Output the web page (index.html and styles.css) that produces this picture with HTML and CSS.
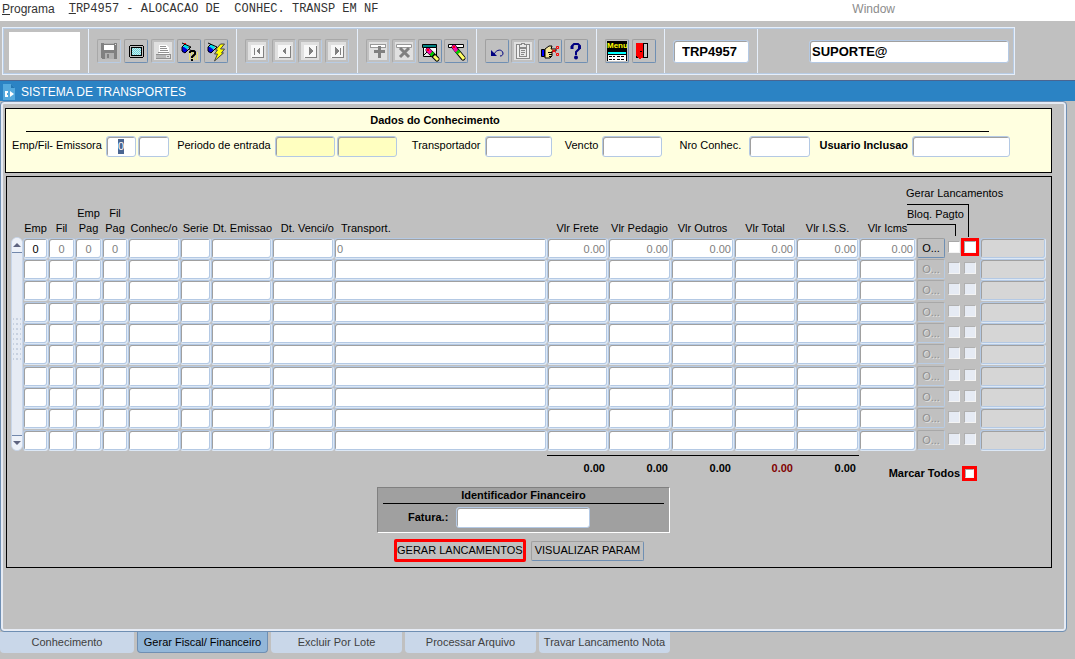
FILE: index.html
```html
<!DOCTYPE html>
<html lang="pt-BR">
<head>
    <meta charset="UTF-8">
    <meta name="viewport" content="width=device-width, initial-scale=1.0">
    <title>TRP4957 - Sistema de Transportes</title>
    <link rel="stylesheet" href="styles.css">
</head>
<body>
    <nav class="menu">
        <a href="#"><u>P</u>rograma</a>
        <a href="#" class="program-name"><u>T</u>RP4957 - ALOCACAO DE  CONHEC. TRANSP EM NF</a>
        <a href="#" class="window-menu">Window</a>
    </nav>

    <header class="toolbar">
        <div class="group"><div class="logo"></div></div>
        <div class="group">
            <button class="tool off" aria-label="Salvar"><svg viewBox="0 0 24 24"><path fill="#808080" d="M4 4h16v16H5l-1-1z"/><path fill="#fff" d="M7 6h10v5H7z"/><path fill="#b0b0b0" d="M7 4h10v1H7zM8 14h9v6H8z"/><path fill="#808080" d="M10 15h2v4h-2z"/><path fill="#e8e8e8" d="M18 5h1v1h-1z"/></svg></button>
            <button class="tool" aria-label="Tela"><svg viewBox="0 0 24 24"><path d="M6 6h13v1h1v11h-1v1H6v-1H5V7h1z"/><path fill="#c0c0c0" d="M6 7h13v11H6z"/><path d="M7 8h11v9H7z"/><path fill="#d8e8e8" d="M8 9h9v7H8z"/><path stroke="#60d8e0" stroke-dasharray="1 1" d="M8 9.500h9M8 11.500h9M8 13.500h9M8 15.500h9"/><path stroke="#60d8e0" stroke-dasharray="1 1" d="M9 10.500h8M9 12.500h8M9 14.500h8"/></svg></button>
            <button class="tool off" aria-label="Imprimir"><svg viewBox="0 0 24 24"><path fill="#e0e0e0" d="M3 3h18v18H3z"/><path fill="#fff" d="M8 6h8l2 3v6H8z"/><path fill="#909090" d="M9 7h6v1H9zM9 9h7v1H9zM9 11h8v1H9zM7 13h11v1H7zM5 15h15v1H5zM5 19h15v1H5zM19 15h1v5h-1zM16 17h2v1h-2z"/><path fill="#b8b8b8" d="M5 16h10v3H5z"/></svg></button>
            <button class="tool" aria-label="Entrar consulta"><svg viewBox="0 0 24 24" class="smooth"><path stroke="#e8e070" stroke-width="8" stroke-dasharray="1 1" d="M12 17h9"/><path fill="#00e0e8" d="M7 6h4l1 3-4 2-2-3z"/><path fill="#0000e0" d="M5 8h2l4 3-3 3-3-1z"/><path fill="none" stroke="#000" d="M5 4l9 4-6 6-3-2V8l3-3M12 8l1 3"/><path fill="#f00" d="M7 4h2v1H7z"/><path stroke="#000" stroke-width="2" fill="none" d="M13 14v-1l1-1h3l1 1v2l-3 3v1M14 21h2"/></svg></button>
            <button class="tool" aria-label="Executar consulta"><svg viewBox="0 0 24 24" class="smooth"><path fill="#00e0e8" d="M6 6h4l1 3-4 2-2-3z"/><path fill="#0000e0" d="M4 8h2l4 3-3 3-3-1z"/><path fill="none" stroke="#000" d="M4 4l9 4-6 6-3-2V8l3-3"/><path fill="#ff0" stroke="#444" d="M16.500 5h4l-4 5h4l-3 4h2l-9 8 3-7h-3l3-4h-2z"/></svg></button>
        </div>
        <div class="group">
            <button class="tool off" aria-label="Primeiro"><svg viewBox="0 0 24 24"><path fill="#e0e0e0" d="M3 3h18v18H3z"/><path fill="#f8f8f8" d="M6 6h13v13H6z"/><path fill="#808080" d="M18 7h1v12H7v-1h11zM9 9h1v7H9zM15 8v8l-4-4z"/></svg></button>
            <button class="tool off" aria-label="Anterior"><svg viewBox="0 0 24 24"><path fill="#e0e0e0" d="M3 3h18v18H3z"/><path fill="#f8f8f8" d="M6 6h13v13H6z"/><path fill="#808080" d="M18 7h1v12H7v-1h11zM14 8v8l-4-4z"/></svg></button>
            <button class="tool off" aria-label="Proximo"><svg viewBox="0 0 24 24"><path fill="#e0e0e0" d="M3 3h18v18H3z"/><path fill="#f8f8f8" d="M6 6h13v13H6z"/><path fill="#808080" d="M18 7h1v12H7v-1h11zM11 8v8l4-4z"/></svg></button>
            <button class="tool off" aria-label="Ultimo"><svg viewBox="0 0 24 24"><path fill="#e0e0e0" d="M3 3h18v18H3z"/><path fill="#f8f8f8" d="M6 6h13v13H6z"/><path fill="#808080" d="M18 7h1v12H7v-1h11zM15 9h1v7h-1zM10 8v8l4-4z"/></svg></button>
        </div>
        <div class="group">
            <button class="tool off" aria-label="Incluir"><svg viewBox="0 0 24 24"><path fill="#e0e0e0" d="M3 3h18v18H3z"/><path fill="#fff" stroke="#999" d="M4.500 5.500h15v3h-15z"/><path fill="#808080" d="M12 7h3v4h4v3h-4v5h-3v-5H8v-3h4z"/></svg></button>
            <button class="tool off" aria-label="Excluir"><svg viewBox="0 0 24 24" class="smooth"><path fill="#e0e0e0" d="M3 3h18v18H3z"/><path fill="#fff" stroke="#999" d="M4.500 5.500h15v3h-15z"/><path stroke="#808080" stroke-width="3" d="M8 9l9 9M17 9l-9 9"/></svg></button>
            <button class="tool" aria-label="Limpar bloco"><svg viewBox="0 0 24 24" class="smooth"><path fill="#008080" stroke="#000" d="M4.500 5.500h14v3h-14z"/><path fill="#e8e8e8" stroke="#000" d="M5.500 8.500h13v9h-13z"/><path fill="#fff" d="M6 9h12v3H6z"/><path stroke="#000" d="M9 11.500h3M6 16l4-4"/><path stroke="#000" stroke-width="5" stroke-linecap="round" d="M10 11l9 9"/><path stroke="#f0a" stroke-width="4" stroke-linecap="round" d="M10 11l2 2"/><path stroke="#0c0" stroke-width="4" d="M13 14l2 2"/><path stroke="#ff6" stroke-width="3" d="M16 17l4 4"/><path fill="#f00" d="M9 10h2v2H9z"/></svg></button>
            <button class="tool" aria-label="Limpar registro"><svg viewBox="0 0 24 24" class="smooth"><path fill="#fff" stroke="#000" d="M4.500 5.500h15v3h-15z"/><path stroke="#000" stroke-width="5" stroke-linecap="round" d="M10 8l9 11"/><path stroke="#f0a" stroke-width="4" stroke-linecap="round" d="M10 8l2 3"/><path stroke="#0c0" stroke-width="4" d="M13 12l2 2"/><path stroke="#ff6" stroke-width="3" d="M15 14l5 6"/><path fill="#f00" d="M9 7h2v2H9z"/></svg></button>
        </div>
        <div class="group">
            <button class="tool" aria-label="Desfazer"><svg viewBox="0 0 24 24" class="smooth"><path fill="none" stroke="#000080" d="M9 15c3-5 8-5 9-1 0 2-1 3-3 3"/><path fill="#000080" d="M6 11v6h6z"/></svg></button>
            <button class="tool off" aria-label="Colar"><svg viewBox="0 0 24 24"><path fill="#e0e0e0" d="M3 3h18v18H3z"/><path fill="#f0f0f0" stroke="#888" d="M5.500 5.500h13v14h-13z"/><path fill="#e8e8e8" stroke="#888" d="M8.500 8.500v-3h2v-1h3v1h2v3zM8.500 9.500h7v8h-7z"/><path fill="#888" d="M10 11h4v1h-4zM10 13h4v1h-4zM10 15h3v1h-3z"/></svg></button>
            <button class="tool" aria-label="Lista"><svg viewBox="0 0 24 24" class="smooth"><path fill="#00f" stroke="#000" d="M3.500 10.500h3v7h-3z"/><path fill="#f4e69a" stroke="#000" d="M7 10l4-3h3l-1 3h5v2h-4v5l-2 2H7z"/><path stroke="#000" d="M10 13.500h4M11 15.500h3M11 17.500h2"/><path fill="none" stroke="#f00" d="M14 10.500l4 3M14 13.500l4-3M18.500 7.500h2v2h-2zM18.500 14.500h2v2h-2z"/></svg></button>
            <button class="tool" aria-label="Ajuda"><svg viewBox="0 0 24 24" class="smooth"><path fill="none" stroke="#000080" stroke-width="2" d="M8 9V7l2-2h4l2 2v2l-4 4v3"/><path stroke="#000080" stroke-width="3" d="M8 7v3M15.500 7v3"/><circle cx="12" cy="18.500" r="2" fill="#000080"/></svg></button>
        </div>
        <div class="group pair">
            <button class="tool menu-tool" aria-label="Menu"><svg viewBox="0 0 24 24"><path d="M2 12h20v10H2z"/><path fill="#fff" d="M3 16h18v6H3z"/><path fill="#0ff" d="M3 13h18v2H3z"/><path stroke="#000" stroke-dasharray="3 1" d="M4 17.500h6M12 17.500h7M4 20.500h6M12 20.500h7"/></svg><span>Menu</span></button>
            <button class="tool" aria-label="Sair"><svg viewBox="0 0 24 24"><path fill="#c8c8c8" stroke="#000" d="M4.500 4.500h11v14h-11z"/><path fill="#f00" d="M4 4h7v15l-4 1-3-3z"/><path d="M11 4h1v15h-1zM8 12h2v1H8z"/></svg></button>
        </div>
        <div class="group wide"><input class="field" value="TRP4957" aria-label="Programa"></div>
        <div class="group user"><input class="field" value="SUPORTE@" aria-label="Usuario"></div>
    </header>

    <div class="title-bar">
        <svg viewBox="0 0 14 16"><path fill="#55a9dd" d="M1 0h8l4 4v12H1z"/><path fill="#2477b3" d="M9 0v4h4z"/><path fill="none" stroke="#fff" stroke-width="2" d="M6 8H4v4h2"/><path fill="#fff" d="M8 7l4 3-4 3z"/></svg>
        <h1>SISTEMA DE TRANSPORTES</h1>
    </div>

    <main>
        <section class="filters">
            <h2>Dados do Conhecimento</h2>
            <form class="filter-row">
                <label for="emp">Emp/Fil- Emissora</label>
                <div class="field selected"><input id="emp" value="0" size="1"></div>
                <input class="field" aria-label="Filial emissora">
                <label for="inicio">Periodo de entrada</label>
                <input class="field required" id="inicio">
                <input class="field required" aria-label="Fim do periodo">
                <label for="transp">Transportador</label>
                <input class="field" id="transp">
                <label for="vencto">Vencto</label>
                <input class="field" id="vencto">
                <label for="nro" class="spaced">Nro Conhec.</label>
                <input class="field" id="nro">
                <label for="usuario" class="strong">Usuario Inclusao</label>
                <input class="field" id="usuario">
            </form>
        </section>

        <section class="records">
            <div class="list">
                <div class="scrollbar">
                    <button aria-label="Subir"><svg viewBox="0 0 8 4"><path d="M4 0l4 4H0z"/></svg></button>
                    <div class="grip"></div>
                    <button aria-label="Descer"><svg viewBox="0 0 8 4"><path d="M0 0h8L4 4z"/></svg></button>
                </div>
                <table>
                    <colgroup>
                        <col class="c25"><col class="c27"><col class="c27"><col class="c26"><col class="c52">
                        <col class="c31"><col class="c61"><col class="c62"><col>
                        <col class="c61"><col class="c63"><col class="c63"><col class="c62"><col class="c63"><col class="c57">
                        <col class="c30"><col class="c16"><col class="c18"><col class="c66">
                    </colgroup>
                    <thead>
                        <tr>
                            <th>Emp</th><th>Fil</th><th>Emp<br>Pag</th><th>Fil<br>Pag</th><th>Conhec/o</th>
                            <th>Serie</th><th class="end">Dt. Emissao</th><th class="end">Dt. Venci/o</th><th class="start">Transport.</th>
                            <th>Vlr Frete</th><th>Vlr Pedagio</th><th>Vlr Outros</th><th>Vlr Total</th><th>Vlr I.S.S.</th><th>Vlr Icms</th>
                            <th colspan="4"></th>
                        </tr>
                    </thead>
                    <tbody id="rows"></tbody>
                    <tfoot>
                        <tr>
                            <td colspan="9"></td>
                            <td><output>0.00</output></td>
                            <td><output>0.00</output></td>
                            <td><output>0.00</output></td>
                            <td><output class="total">0.00</output></td>
                            <td><output>0.00</output></td>
                            <td colspan="4"><label class="mark-all">Marcar Todos<input type="checkbox" class="highlight"></label></td>
                            <td></td>
                        </tr>
                    </tfoot>
                </table>
                <!-- Leader lines down to the two checkbox columns -->
                <div class="flags">
                    <p>Gerar Lancamentos</p>
                    <div class="flag-outer">
                        <p>Bloq. Pagto</p>
                        <div class="flag-inner"></div>
                    </div>
                </div>
            </div>

            <div class="finance">
                <div class="invoice">
                    <h2>Identificador Financeiro</h2>
                    <div class="invoice-row">
                        <label for="fatura">Fatura.:</label>
                        <input class="field" id="fatura">
                    </div>
                </div>
                <div class="actions">
                    <button class="btn generate">GERAR LANCAMENTOS</button>
                    <button class="btn">VISUALIZAR PARAM</button>
                </div>
            </div>
        </section>
    </main>

    <nav class="tabs">
        <button>Conhecimento</button>
        <button class="active">Gerar Fiscal/ Financeiro</button>
        <button>Excluir Por Lote</button>
        <button>Processar Arquivo</button>
        <button>Travar Lancamento Nota</button>
    </nav>

    <script>
        const rows = document.getElementById("rows");
        const columns = ["Emp", "Fil", "Emp Pag", "Fil Pag", "Conhec/o", "Serie", "Dt. Emissao", "Dt. Venci/o", "Transport.",
            "Vlr Frete", "Vlr Pedagio", "Vlr Outros", "Vlr Total", "Vlr I.S.S.", "Vlr Icms"];
        const firstRecord = ["0", "0", "0", "0", "", "", "", "", "0", "0.00", "0.00", "0.00", "0.00", "0.00", "0.00"];

        for (let i = 0; i < 10; i++) {
            const off = i > 0 ? "disabled" : "";
            let html = "";
            columns.forEach((name, c) => {
                const kind = c < 4 ? "center" : c > 8 ? "amount" : "";
                const current = c === 0 ? "current" : "";
                html += `<td><input class="field ${kind} ${current}" aria-label="${name}" value="${i === 0 ? firstRecord[c] : ""}"></td>`;
            });
            html += `<td><button class="btn more" ${off}>O...</button></td>`;
            html += `<td><input type="checkbox" aria-label="Bloq. Pagto" ${off}></td>`;
            html += `<td><input type="checkbox" aria-label="Gerar Lancamentos" class="${i === 0 ? "highlight" : ""}" ${off}></td>`;
            html += `<td><input class="field" aria-label="Situacao" disabled></td>`;
            const row = document.createElement("tr");
            row.innerHTML = html;
            rows.appendChild(row);
        }
    </script>
</body>
</html>
```

FILE: styles.css
```css
* {
    box-sizing: border-box;
}

body {
    margin: 0;
    min-height: 100vh;
    display: flex;
    flex-direction: column;
    background: #c0c0c0;
    color: #000;
    font: 11px/15px "Liberation Sans", Arial, sans-serif;
}

h1, h2, p {
    margin: 0;
}

input, button {
    font: inherit;
    color: inherit;
    margin: 0;
}

/* Menu */
.menu {
    display: flex;
    height: 21px;
    padding: 0 180px 0 2px;
    gap: 14px;
    background: #fff;
    font-size: 12px;
    line-height: 19px;
}

.menu a {
    color: #333;
    text-decoration: none;
}

.menu .program-name {
    font-family: "Liberation Mono", monospace;
    white-space: pre;
}

.menu .window-menu {
    margin-left: auto;
    color: #8c8c8c;
}

/* Toolbar */
.toolbar {
    display: grid;
    grid-template-columns: 86px 148px 121px 119px 120px 68px 93px 256px;
    width: max-content;
    height: 48px;
    margin: 6px 0 5px 2px;
    border: 1px solid #e6effb;
    outline: 1px solid #b8cce4;
    outline-offset: -2px;
}

.group {
    display: flex;
    align-items: center;
    justify-content: space-between;
    padding: 0 8px;
    border-right: 1px solid #e6effb;
}

.group:last-child {
    border-right: 0;
}

.logo {
    width: 71px;
    height: 38px;
    margin-left: -2px;
    background: #fff;
}

.tool {
    position: relative;
    width: 24px;
    height: 24px;
    padding: 0;
    background: #c0c0c0;
    border: 1px solid;
    border-color: #a0a0a0 #6f8fb3 #6f8fb3 #a0a0a0;
    border-radius: 2px;
}

.tool.off {
    border-color: #a8a8a8 #b8cce4 #b8cce4 #a8a8a8;
}

.tool svg {
    display: block;
    width: 24px;
    height: 24px;
    margin: -1px;
    shape-rendering: crispEdges;
}

.tool svg.smooth {
    shape-rendering: auto;
}

.menu-tool span {
    position: absolute;
    left: 1px;
    top: 1px;
    width: 20px;
    overflow: hidden;
    font-size: 8px;
    line-height: 10px;
    font-weight: bold;
    background: #000;
    color: #ff0;
}

.toolbar .field {
    height: 23px;
    font-size: 13px;
    font-weight: bold;
}

.wide .field {
    width: 76px;
    padding-left: 8px;
}

.user {
    justify-content: flex-end;
    padding-right: 5px;
}

.user .field {
    width: 200px;
    padding-left: 2px;
}

/* Form fields */
.field {
    width: 100%;
    height: 21px;
    padding: 0 3px;
    background: #fff;
    border: 1px solid #b4c9e4;
    border-radius: 3px;
    box-shadow: inset 1px 1px 0 #a0a0a0;
    outline: 0;
}

.field.required {
    background: #ffffc0;
}

.field.selected {
    display: flex;
    align-items: center;
    justify-content: center;
}

.selected input {
    width: 6px;
    height: 15px;
    padding: 0;
    border: 0;
    background: #4a6591;
    color: #fff;
}

input[type="checkbox"] {
    appearance: none;
    display: block;
    width: 12px;
    height: 12px;
    background: #fff;
    border: 1px solid;
    border-color: #a8a8a8 #f4f4f4 #f4f4f4 #a8a8a8;
}

input[type="checkbox"]:disabled {
    background: #e6ebf4;
    border-color: #b0b0b0 #f4f4f4 #f4f4f4 #b0b0b0;
}

input[type="checkbox"].highlight {
    outline: 3px solid #f00;
}

.btn {
    height: 20px;
    padding: 0 3px;
    background: #c0c0c0;
    border: 1px solid;
    border-color: #a0a0a0 #6f8fb3 #6f8fb3 #a0a0a0;
    border-radius: 2px;
    white-space: nowrap;
}

/* Window title */
.title-bar {
    display: flex;
    align-items: center;
    gap: 5px;
    height: 21px;
    padding: 2px 2px 0;
    background: #2b83c4;
    border-top: 1px solid #4a6591;
    color: #fff;
}

.title-bar svg {
    width: 14px;
    height: 16px;
}

.title-bar h1 {
    font-size: 12px;
    font-weight: normal;
}

main {
    flex: 1;
    margin-right: 8px;
    padding: 6px 14px 5px 4px;
    border: 1px solid #6f8fb3;
    border-radius: 4px;
    box-shadow: inset 0 0 0 2px #e6ebf4;
}

/* Filters */
.filters {
    height: 65px;
    background: #ffffe0;
    border: 1px solid #000;
}

.filters h2 {
    margin: 4px 62px 4px 20px;
    padding: 0 145px 3px 0;
    border-bottom: 1px solid #000;
    font-size: 11px;
    text-align: center;
}

.filter-row {
    display: grid;
    grid-template-columns: 98fr 30fr 31fr 102fr 60fr 60fr 84fr 68fr 46fr 60fr 83fr 61fr 98fr 98fr;
    column-gap: 2px;
    padding-right: 41px;
}

.filter-row label {
    padding: 2px 2px 0 0;
    text-align: right;
    white-space: nowrap;
}

.filter-row .spaced {
    padding-right: 6px;
}

.filter-row .strong {
    font-weight: bold;
}

/* Records */
.records {
    margin: 3px 0 0 1px;
    min-height: 392px;
    border: 1px solid #000;
}

.list {
    position: relative;
    display: flex;
    padding: 0 5px 0 4px;
}

.scrollbar {
    display: flex;
    flex-direction: column;
    flex: none;
    width: 12px;
    height: 214px;
    margin: 60px 1px 0 0;
    background: #e6ebf4;
    border: 1px solid #c8d6ea;
    border-radius: 6px;
    overflow: hidden;
}

.scrollbar button {
    display: flex;
    align-items: center;
    justify-content: center;
    height: 14px;
    padding: 0;
    border: 0;
    background: #eef2f9;
    fill: #5f6480;
}

.scrollbar svg {
    width: 8px;
    height: 4px;
}

.grip {
    flex: 1;
    border: solid #7288ac;
    border-width: 1px 0;
    background: radial-gradient(circle, #aab6cc 1px, transparent 1px) center / 4px 5px;
    background-clip: content-box;
    padding: 64px 1px 72px;
}

table {
    width: 100%;
    margin-left: -1px;
    table-layout: fixed;
    border-collapse: collapse;
}

.c16 { width: 16px; }
.c18 { width: 18px; }
.c25 { width: 25px; }
.c26 { width: 26px; }
.c27 { width: 27px; }
.c30 { width: 30px; }
.c31 { width: 31px; }
.c52 { width: 52px; }
.c57 { width: 57px; }
.c61 { width: 61px; }
.c62 { width: 62px; }
.c63 { width: 63px; }
.c66 { width: 66px; }

th, td {
    padding: 0;
    vertical-align: top;
}

th {
    height: 61px;
    padding-bottom: 2px;
    font-weight: normal;
    vertical-align: bottom;
    white-space: nowrap;
}

th.end {
    text-align: right;
}

th.start {
    padding-left: 7px;
    text-align: left;
}

tbody tr {
    height: 21px;
}

tbody tr:nth-child(3n) {
    height: 22px;
}

td .field {
    display: block;
    padding: 0 2px;
    color: #808080;
    border-color: #b4c9e4 #dce8f6 #dce8f6 #b4c9e4;
    box-shadow: inset 1px 1px 0 #a0a0a0, inset -1px -1px 0 #b4c9e4;
}

td .center {
    text-align: center;
}

td .current {
    color: #000;
}

td .amount {
    text-align: right;
}

td .field:disabled {
    background: #d6d6d6;
}

td input[type="checkbox"] {
    margin: 3px 0 0 2px;
}

.more {
    display: block;
    width: 28px;
    margin-left: 1px;
}

.more:disabled {
    color: #909090;
    text-shadow: 1px 1px 0 #e0e0e0;
    border-color: #a8a8a8 #b8cce4 #b8cce4 #a8a8a8;
}

tfoot td {
    height: 31px;
}

output {
    display: block;
    margin-top: 4px;
    padding: 5px 3px 0;
    border-top: 1px solid #000;
    font-weight: bold;
    text-align: right;
}

output.total {
    color: #800000;
}

.mark-all {
    display: flex;
    align-items: center;
    justify-content: flex-end;
    gap: 5px;
    padding: 15px 6px 0 0;
    font-weight: bold;
}

td .mark-all input[type="checkbox"] {
    width: 9px;
    height: 9px;
    margin: 0;
}

.flags {
    position: absolute;
    top: 9px;
    right: 44px;
    width: 101px;
    white-space: nowrap;
}

.flag-outer {
    width: 62px;
    height: 33px;
    margin: 3px 0 0 1px;
    padding-top: 2px;
    border-top: 1px solid #000;
    border-right: 1px solid #000;
}

.flag-inner {
    width: 49px;
    height: 12px;
    margin-top: 2px;
    border-top: 1px solid #000;
    border-right: 1px solid #000;
}

/* Invoice box and actions */
.finance {
    width: 293px;
    margin: 5px 0 0 calc(50% - 152px);
}

.invoice {
    height: 46px;
    padding: 0 5px;
    background: #a0a0a0;
    border: 1px solid;
    border-color: #808080 #fff #fff #808080;
}

.invoice h2 {
    border-bottom: 1px solid #000;
    font-size: 11px;
    text-align: center;
}

.invoice-row {
    display: flex;
    align-items: center;
    gap: 8px;
    padding: 3px 0 0 25px;
    font-weight: bold;
}

.invoice .field {
    width: 134px;
}

.actions {
    display: flex;
    align-items: center;
    gap: 5px;
    padding: 6px 0 0 17px;
}

.btn.generate {
    height: 23px;
    padding: 0;
    border: 3px solid #f00;
}

/* Tabs */
.tabs {
    display: flex;
    gap: 3px;
    padding-bottom: 6px;
}

.tabs button {
    width: 131px;
    height: 21px;
    padding: 0;
    background: #c9d7e9;
    border: 0;
    border-radius: 0 0 4px 4px;
    color: #404040;
    white-space: nowrap;
}

.tabs button:first-child {
    width: 134px;
}

.tabs .active {
    background: #93b7d9;
    border: 1px solid #6f8fb3;
    border-top: 0;
    color: #000;
}
```
